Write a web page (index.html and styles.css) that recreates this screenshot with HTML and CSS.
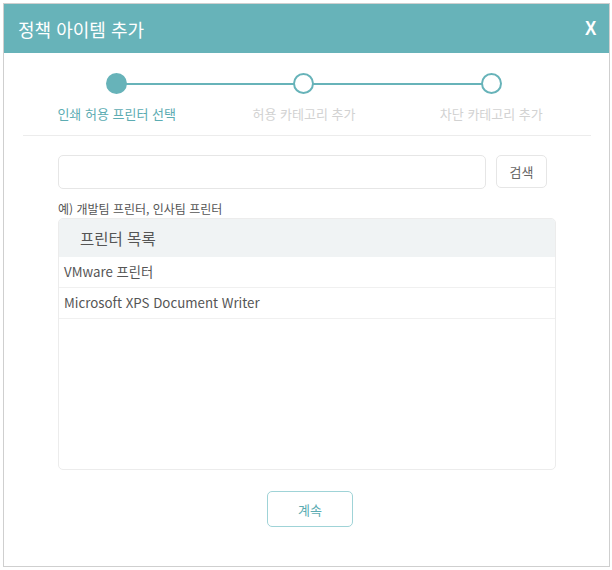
FILE: index.html
```html
<!DOCTYPE html>
<html lang="ko">
<head>
  <meta charset="UTF-8" />
  <meta name="viewport" content="width=device-width, initial-scale=1" />
  <title>정책 아이템 추가</title>
  <link rel="stylesheet" href="styles.css">
</head>
<body>
  <div class="modal">
    <div class="modal-header">
      <h2>정책 아이템 추가</h2>
      <span class="close">X</span>
    </div>

    <div class="steps">
      <div class="step done">
        <span class="dot"></span>
        <span class="step-label">인쇄 허용 프린터 선택</span>
      </div>
      <div class="step">
        <span class="dot"></span>
        <span class="step-label">허용 카테고리 추가</span>
      </div>
      <div class="step last">
        <span class="dot"></span>
        <span class="step-label">차단 카테고리 추가</span>
      </div>
    </div>

    <div class="content">
      <div class="search-row">
        <input type="text" class="search-input" />
        <button class="search-btn">검색</button>
      </div>
      <p class="hint">예) 개발팀 프린터, 인사팀 프린터</p>

      <div class="list">
        <div class="list-head">프린터 목록</div>
        <div class="list-row">VMware 프린터</div>
        <div class="list-row">Microsoft XPS Document Writer</div>
      </div>

      <div class="actions">
        <button class="next-btn">계속</button>
      </div>
    </div>
  </div>
</body>
</html>
```

FILE: styles.css
```css
body {
  margin: 0;
  padding: 3px;
  background: #fff;
  font-family: "Noto Sans CJK KR", "Noto Sans", sans-serif;
  color: #555;
}
.modal {
  width: 605px;
  height: 562px;
  border: 1px solid #cfcfcf;
  background: #fff;
}
.modal-header {
  height: 49px;
  background-color: #67b3b9;
  display: flex;
  align-items: center;
  justify-content: space-between;
  padding: 0 12px 0 14px;
}
.modal-header h2 {
  margin: 0;
  font-size: 18px;
  font-weight: normal;
  color: #fff;
}
.close {
  font-family: "Liberation Sans", sans-serif;
  font-weight: bold;
  font-size: 20px;
  color: #fff;
  transform: scaleX(0.85);
}

.steps {
  display: grid;
  grid-template-columns: repeat(3, 1fr);
  margin: 20px 18px 0 19px;
  padding: 0 6px 12px 0;
  border-bottom: 1px solid #ececec;
}
.step {
  position: relative;
  display: flex;
  flex-direction: column;
  align-items: center;
}
.step::before {
  content: "";
  position: absolute;
  top: 10px;
  left: 50%;
  width: 100%;
  height: 2px;
  background: #67b3b9;
}
.step.last::before {
  display: none;
}
.dot {
  position: relative;
  width: 17px;
  height: 17px;
  border: 2px solid #67b3b9;
  border-radius: 50%;
  background: #fff;
}
.step.done .dot {
  background: #67b3b9;
}
.step-label {
  margin-top: 10px;
  font-size: 13px;
  color: #d2d2d2;
}
.step.done .step-label {
  color: #5cacb2;
}

.content {
  padding: 19px 0 0 54px;
}
.search-row {
  display: flex;
  gap: 10px;
}
.search-input {
  width: 428px;
  height: 34px;
  box-sizing: border-box;
  border: 1px solid #e6e6e6;
  border-radius: 5px;
}
.search-btn {
  width: 51px;
  height: 33px;
  border: 1px solid #e6e6e6;
  border-radius: 5px;
  background: #fff;
  font-family: inherit;
  font-size: 13px;
  color: #666;
}
.hint {
  margin: 11px 0 0;
  font-size: 12px;
  line-height: 17px;
  color: #555;
}
.list {
  width: 496px;
  height: 250px;
  margin-top: 1px;
  border: 1px solid #ececec;
  border-radius: 5px;
  overflow: hidden;
}
.list-head {
  height: 38px;
  line-height: 38px;
  padding-left: 21px;
  background: #f0f3f4;
  font-size: 15.5px;
}
.list-row {
  height: 30px;
  line-height: 30px;
  padding-left: 5px;
  border-bottom: 1px solid #f0f0f0;
  font-size: 13.3px;
}
.actions {
  width: 504px;
  display: flex;
  justify-content: center;
  padding-top: 21px;
}
.next-btn {
  width: 86px;
  height: 36px;
  border: 1px solid #9fd3d7;
  border-radius: 5px;
  background: #fff;
  font-family: inherit;
  font-size: 13px;
  color: #5cacb2;
}
```
